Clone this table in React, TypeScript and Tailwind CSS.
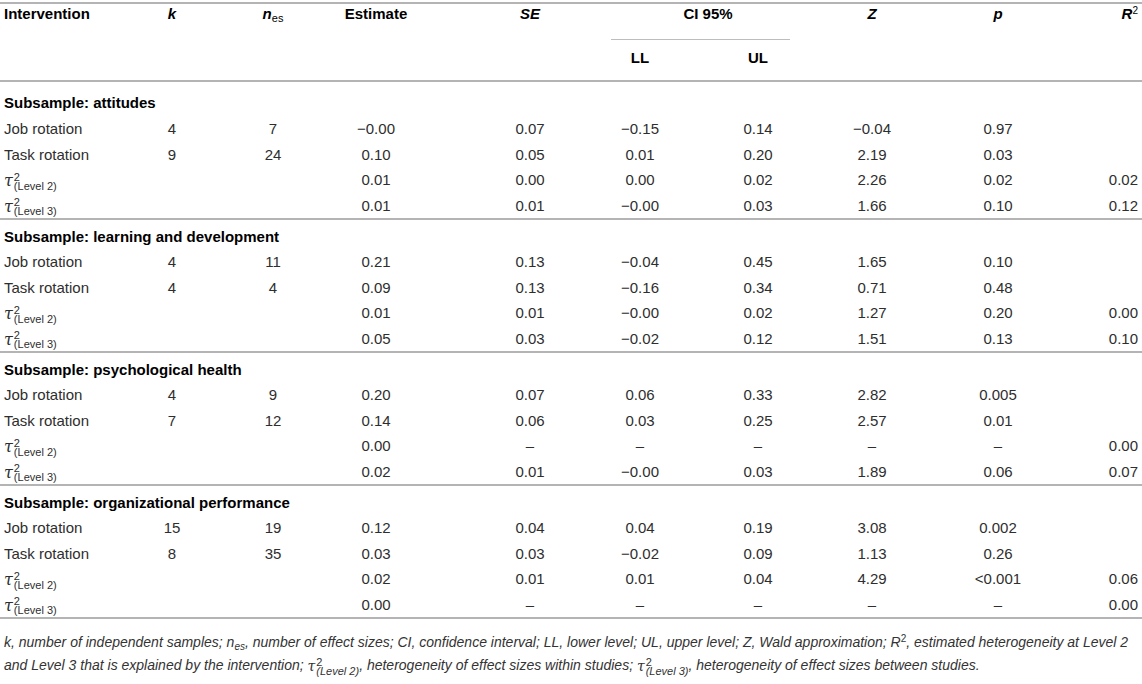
import React from 'react';

const G = 'grid grid-cols-[122px_100px_102px_104px_162px_100px_136px_92px_160px_64px]';

type Row = { label: string; k?: string; n?: string; v: string[]; r2?: string };
type Group = { title: string; rows: Row[] };

const GROUPS: Group[] = [
  {
    title: 'Subsample: attitudes',
    rows: [
      { label: 'Job rotation', k: '4', n: '7', v: ['\u22120.00', '0.07', '\u22120.15', '0.14', '\u22120.04', '0.97'] },
      { label: 'Task rotation', k: '9', n: '24', v: ['0.10', '0.05', '0.01', '0.20', '2.19', '0.03'] },
      { label: 'L2', v: ['0.01', '0.00', '0.00', '0.02', '2.26', '0.02'], r2: '0.02' },
      { label: 'L3', v: ['0.01', '0.01', '\u22120.00', '0.03', '1.66', '0.10'], r2: '0.12' },
    ],
  },
  {
    title: 'Subsample: learning and development',
    rows: [
      { label: 'Job rotation', k: '4', n: '11', v: ['0.21', '0.13', '\u22120.04', '0.45', '1.65', '0.10'] },
      { label: 'Task rotation', k: '4', n: '4', v: ['0.09', '0.13', '\u22120.16', '0.34', '0.71', '0.48'] },
      { label: 'L2', v: ['0.01', '0.01', '\u22120.00', '0.02', '1.27', '0.20'], r2: '0.00' },
      { label: 'L3', v: ['0.05', '0.03', '\u22120.02', '0.12', '1.51', '0.13'], r2: '0.10' },
    ],
  },
  {
    title: 'Subsample: psychological health',
    rows: [
      { label: 'Job rotation', k: '4', n: '9', v: ['0.20', '0.07', '0.06', '0.33', '2.82', '0.005'] },
      { label: 'Task rotation', k: '7', n: '12', v: ['0.14', '0.06', '0.03', '0.25', '2.57', '0.01'] },
      { label: 'L2', v: ['0.00', '\u2013', '\u2013', '\u2013', '\u2013', '\u2013'], r2: '0.00' },
      { label: 'L3', v: ['0.02', '0.01', '\u22120.00', '0.03', '1.89', '0.06'], r2: '0.07' },
    ],
  },
  {
    title: 'Subsample: organizational performance',
    rows: [
      { label: 'Job rotation', k: '15', n: '19', v: ['0.12', '0.04', '0.04', '0.19', '3.08', '0.002'] },
      { label: 'Task rotation', k: '8', n: '35', v: ['0.03', '0.03', '\u22120.02', '0.09', '1.13', '0.26'] },
      { label: 'L2', v: ['0.02', '0.01', '0.01', '0.04', '4.29', '<0.001'], r2: '0.06' },
      { label: 'L3', v: ['0.00', '\u2013', '\u2013', '\u2013', '\u2013', '\u2013'], r2: '0.00' },
    ],
  },
];

// tau squared with stacked sub/superscript
function Tau({ level, small }: { level: string; small?: boolean }) {
  return (
    <span className="inline-flex items-center align-middle not-italic">
      <span
        className={
          small
            ? "italic font-['DejaVu_Serif',serif] text-[14px] leading-none"
            : "italic font-['DejaVu_Serif',serif] text-[16px] leading-none"
        }
      >
        τ
      </span>
      <span className="inline-flex flex-col text-[11px] leading-[10px] ml-px italic-none">
        <span className="-mb-[1px]">2</span>
        <span className={small ? 'italic' : ''}>(Level {level})</span>
      </span>
    </span>
  );
}

function DataRow({ row }: { row: Row }) {
  const label =
    row.label === 'L2' ? <Tau level="2" /> : row.label === 'L3' ? <Tau level="3" /> : row.label;
  return (
    <div className={`${G} h-[25.5px] items-center leading-[25px]`}>
      <div className="pl-1 whitespace-nowrap">{label}</div>
      <div className="text-center">{row.k}</div>
      <div className="text-center">{row.n}</div>
      {row.v.map((x, i) => (
        <div key={i} className={i === 1 ? 'text-center pl-[42px]' : 'text-center'}>
          {x}
        </div>
      ))}
      <div className="text-right pr-1">{row.r2}</div>
    </div>
  );
}

export default function App() {
  return (
    <div className="w-[1142px] h-[684px] bg-white pt-[2px] font-['Liberation_Sans',Arial,sans-serif] text-[15px] text-[#2e2e2e]">
      <div className="border-t-2 border-[#b4b4b4]" />

      {/* header */}
      <div className={`${G} grid-rows-[35px_1px_40px] border-b-2 border-[#b4b4b4] font-bold text-black leading-5`}>
        <div className="row-span-3 pl-1">Intervention</div>
        <div className="row-span-3 text-center italic">k</div>
        <div className="row-span-3 text-center">
          <span className="italic">n</span>
          <sub className="font-normal text-[11px]">es</sub>
        </div>
        <div className="row-span-3 text-center">Estimate</div>
        <div className="row-span-3 text-center italic pl-[42px]">SE</div>
        <div className="col-span-2 col-start-6 row-start-1 text-center">CI 95%</div>
        <div className="row-span-3 col-start-8 row-start-1 text-center italic">Z</div>
        <div className="row-span-3 col-start-9 row-start-1 text-center italic">p</div>
        <div className="row-span-3 col-start-10 row-start-1 text-right pr-1">
          <span className="italic">R</span>
          <sup className="font-normal text-[10px]">2</sup>
        </div>
        <div className="col-span-2 col-start-6 row-start-2 ml-[21px] mr-[36px] bg-[#bdbdbd]" />
        <div className="col-start-6 row-start-3 pt-2 text-center">LL</div>
        <div className="col-start-7 row-start-3 pt-2 text-center">UL</div>
      </div>

      {GROUPS.map((g, gi) => (
        <div key={g.title} className="border-b-2 border-[#b4b4b4]">
          <div
            className={
              gi === 0
                ? 'h-[34px] pt-[9px] pl-1 font-bold text-black leading-6'
                : 'h-[29px] pt-[5px] pl-1 font-bold text-black leading-6'
            }
          >
            {g.title}
          </div>
          {g.rows.map((r, ri) => (
            <DataRow key={ri} row={r} />
          ))}
        </div>
      ))}

      <p className="pt-[12px] px-1 italic text-[14px] leading-[23px] text-[#333]">
        k, number of independent samples; n<sub className="text-[10px]">es</sub>, number of effect sizes; CI,
        confidence interval; LL, lower level; UL, upper level; Z, Wald approximation; R
        <sup className="not-italic text-[10px]">2</sup>, estimated heterogeneity at Level 2 and Level 3 that is explained by
        the intervention; <Tau level="2" small />, heterogeneity of effect sizes within studies; <Tau level="3" small />,
        heterogeneity of effect sizes between studies.
      </p>
    </div>
  );
}
